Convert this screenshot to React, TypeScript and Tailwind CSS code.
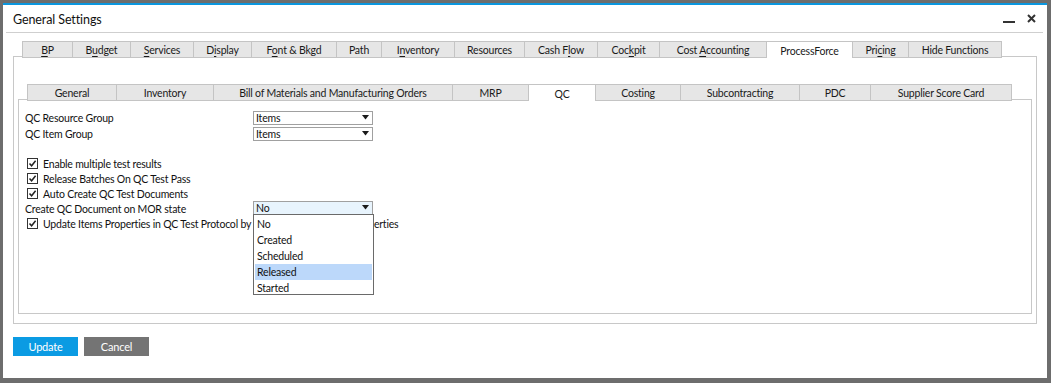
import React from "react";

type Tab = { label: string; w: number; u?: number; active?: boolean };

const outerTabs: Tab[] = [
  { label: "BP", w: 50, u: 0 },
  { label: "Budget", w: 58, u: 1 },
  { label: "Services", w: 63, u: 0 },
  { label: "Display", w: 58, u: 1 },
  { label: "Font & Bkgd", w: 85, u: 1 },
  { label: "Path", w: 45 },
  { label: "Inventory", w: 73, u: 1 },
  { label: "Resources", w: 70 },
  { label: "Cash Flow", w: 73, u: 6 },
  { label: "Cockpit", w: 62, u: 3 },
  { label: "Cost Accounting", w: 107, u: 5 },
  { label: "ProcessForce", w: 87, active: true },
  { label: "Pricing", w: 56, u: 3 },
  { label: "Hide Functions", w: 94 },
];

const innerTabs: Tab[] = [
  { label: "General", w: 89 },
  { label: "Inventory", w: 97 },
  { label: "Bill of Materials and Manufacturing Orders", w: 239 },
  { label: "MRP", w: 76 },
  { label: "QC", w: 68, active: true },
  { label: "Costing", w: 85 },
  { label: "Subcontracting", w: 119 },
  { label: "PDC", w: 71 },
  { label: "Supplier Score Card", w: 142 },
];

function TabLabel({ label, u }: { label: string; u?: number }) {
  if (u == null) return <span className="whitespace-pre">{label}</span>;
  return (
    <span className="whitespace-pre">
      {label.slice(0, u)}
      <span className="underline underline-offset-2">{label[u]}</span>
      {label.slice(u + 1)}
    </span>
  );
}

function TabRow({ tabs }: { tabs: Tab[] }) {
  return (
    <div className="flex h-[16px] -mb-px relative z-10">
      {tabs.map((t, i) => (
        <div
          key={t.label}
          style={{ width: t.w }}
          className={`h-[17px] box-border border-t border-l border-[#c4c4c4] flex items-center justify-center text-[10.5px] leading-none text-[#1a1a1a] pt-[2px] ${
            i === tabs.length - 1 ? "border-r" : ""
          } ${t.active ? "bg-white border-r -mr-px" : "bg-[#e6e6e6] border-b"}`}
        >
          <TabLabel label={t.label} u={t.u} />
        </div>
      ))}
    </div>
  );
}

function Arrow() {
  return (
    <svg width="7" height="5" viewBox="0 0 7 5" className="absolute right-[3px] top-[3px]">
      <path d="M0 0H7L3.5 4.5Z" fill="#1a1a1a" />
    </svg>
  );
}

function Select({ value, focused }: { value: string; focused?: boolean }) {
  return (
    <div
      className={`relative w-[120px] h-[14px] border border-[#a0a0a0] text-[10.5px] leading-[12px] pl-[2px] text-[#111] ${
        focused ? "bg-[#e8f4fd]" : "bg-white"
      }`}
    >
      {value}
      <Arrow />
    </div>
  );
}

function Check() {
  return (
    <div className="w-[11px] h-[11px] border border-[#333] bg-white flex items-center justify-center shrink-0">
      <svg width="9" height="9" viewBox="0 0 9 9">
        <path d="M1.5 4.5L3.6 6.8L7.6 1.8" fill="none" stroke="#222" strokeWidth="1.5" />
      </svg>
    </div>
  );
}

function CheckRow({ label }: { label: string }) {
  return (
    <div className="h-[15px] flex items-center gap-[5px] pl-[2px]">
      <Check />
      <span className="pt-px">{label}</span>
    </div>
  );
}

export default function App() {
  const options = ["No", "Created", "Scheduled", "Released", "Started"];
  return (
    <div className="w-[1051px] h-[383px] bg-[#6d6d6d] pl-[3px] pt-[3px] pr-[4px] pb-[5px] font-['Lato',sans-serif] tracking-[-0.2px] text-[#111] overflow-hidden">
      <div className="h-full bg-white border-t-2 border-[#0a96de] flex flex-col">
        {/* title bar */}
        <div className="h-[27px] flex items-center pl-[10px] pr-[11px]">
          <span className="text-[12.5px] tracking-[-0.1px] text-[#111] mt-[3px]">General Settings</span>
          <div className="ml-auto flex items-center gap-[12px]">
            <div className="w-[12px] h-[2px] bg-[#333] mt-[7px]" />
            <svg width="9" height="9" viewBox="0 0 9 9">
              <path d="M1 1L8 8M8 1L1 8" stroke="#333" strokeWidth="2" />
            </svg>
          </div>
        </div>
        <div className="h-px bg-[#cfcfcf] ml-[3px] mr-[4px]" />

        {/* outer tabs */}
        <div className="mt-[8px] px-[10px]">
          <div className="pl-[9px]">
            <TabRow tabs={outerTabs} />
          </div>
          <div className="h-[268px] border border-[#c8c8c8] px-[4px] pt-[27px] pb-[9px] flex flex-col">
            <div className="pl-[9px]">
              <TabRow tabs={innerTabs} />
            </div>
            <div className="flex-1 border border-[#c8c8c8] pl-[6px] pt-[11px] text-[10.5px] leading-none">
              <div className="h-[16px] flex">
                <span className="w-[228px] pt-[2px]">QC Resource Group</span>
                <Select value="Items" />
              </div>
              <div className="h-[16px] flex">
                <span className="w-[228px] pt-[2px]">QC Item Group</span>
                <Select value="Items" />
              </div>
              <div className="h-[13px]" />
              <CheckRow label="Enable multiple test results" />
              <CheckRow label="Release Batches On QC Test Pass" />
              <CheckRow label="Auto Create QC Test Documents" />
              <div className="h-[15px] flex">
                <span className="w-[228px] pt-[3px]">Create QC Document on MOR state</span>
                <div className="relative">
                  <Select value="No" focused />
                  <div className="absolute left-0 top-[13px] w-[121px] h-[81px] border border-[#6a6a6a] bg-white z-20 px-px pt-px overflow-hidden">
                    {options.map((o) => (
                      <div
                        key={o}
                        className={`h-[16px] flex items-center pl-[2px] pt-px ${o === "Released" ? "bg-[#bcd8fa]" : ""}`}
                      >
                        {o}
                      </div>
                    ))}
                  </div>
                </div>
              </div>
              <CheckRow label="Update Items Properties in QC Test Protocol by QC Test Protocol Item Properties" />
            </div>
          </div>
        </div>

        {/* buttons */}
        <div className="mt-[13px] pl-[10px] flex gap-[6px]">
          <button className="w-[65px] h-[19px] bg-[#0b9be3] text-white text-[11px] leading-none">Update</button>
          <button className="w-[65px] h-[19px] bg-[#747474] text-white text-[11px] leading-none">Cancel</button>
        </div>
      </div>
    </div>
  );
}
